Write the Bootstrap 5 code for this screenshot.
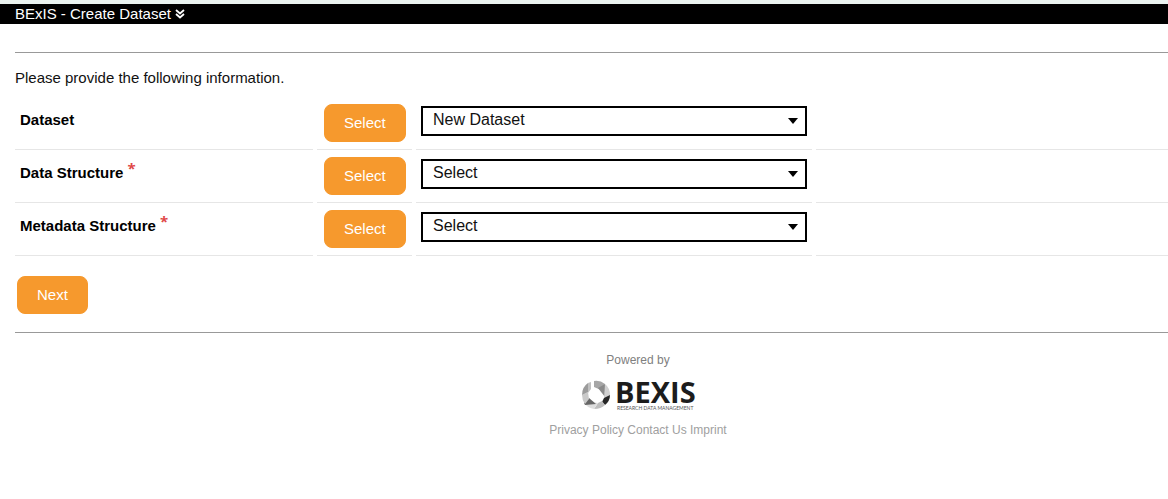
<!DOCTYPE html>
<html lang="en">
<head>
<meta charset="utf-8">
<meta name="viewport" content="width=device-width, initial-scale=1">
<title>BExIS - Create Dataset</title>
<link href="https://cdn.jsdelivr.net/npm/bootstrap@5.3.0/dist/css/bootstrap.min.css" rel="stylesheet">
<style>
body { font-family: "Liberation Sans", Arial, sans-serif; font-size: 15px; line-height: 20px; color: #111; }
.top-strip { height: 4px; background: #eaf3f0; }
.title-bar { height: 20px; background: #000; color: #fff; padding-left: 15px; gap: 4px; }
.page { padding-left: 15px; }
.rule { border: 0; border-top: 1px solid #999; opacity: 1; margin: 0; }
.title-bar + .page > .rule:first-child { margin-top: 28px; }
.intro { margin: 15px 0 9px; }
.form-line { display: grid; grid-template-columns: 298px 95px 396px 1fr; column-gap: 4px; }
.form-line > div { border-bottom: 1px solid #e6e6e6; padding: 7px 5px; }
.form-line label { font-weight: bold; color: #000; padding: 6px 0; }
.req { color: #e04848; font-family: "Open Sans", sans-serif; line-height: 0; vertical-align: 4px; }
.btn-orange { --bs-btn-bg: #f6992d; --bs-btn-color: #fff; --bs-btn-border-color: #f6992d; --bs-btn-hover-bg: #e88a1c; --bs-btn-hover-color: #fff;
  --bs-btn-border-radius: 8px; --bs-btn-font-size: 15px; --bs-btn-line-height: 20px; --bs-btn-padding-x: 19px; --bs-btn-padding-y: 8px; }
.form-line .btn-orange { margin-left: 2px; }
.form-select.pick { height: 30px; margin-top: 2px; padding: 0 30px 3px 10px; border: 2px solid #000; border-radius: 0; color: #111; font-size: 16px; line-height: 23px;
  background-image: url("data:image/svg+xml,%3Csvg xmlns='http://www.w3.org/2000/svg' viewBox='0 0 10 6'%3E%3Cpath d='M0 0h10L5 6z'/%3E%3C/svg%3E");
  background-size: 10px 6px; background-position: right 7px center; }
.next-wrap { padding: 20px 2px 18px; }
.foot { padding: 17px 0 0; margin-left: 108px; font-size: 12px; color: #808080; }
.foot a { color: #a0a0a0; text-decoration: none; }
.brand { overflow: visible; }
</style>
</head>
<body>
<div class="top-strip"></div>
<header class="title-bar d-flex align-items-center">
  <span>BExIS - Create Dataset</span>
  <svg width="10" height="10" viewBox="0 0 10 10" fill="none" stroke="#fff" stroke-width="1.800" aria-hidden="true"><path d="M1 1l4 3.500 4-3.500M1 5l4 3.500 4-3.500"/></svg>
</header>
<main class="page overflow-hidden">
  <hr class="rule">
  <p class="intro">Please provide the following information.</p>
  <form>
    <div class="form-line">
      <div><label for="dataset">Dataset</label></div>
      <div><button type="button" class="btn btn-orange">Select</button></div>
      <div><select id="dataset" class="form-select pick"><option>New Dataset</option></select></div>
      <div></div>
    </div>
    <div class="form-line">
      <div><label for="structure">Data Structure <span class="req">*</span></label></div>
      <div><button type="button" class="btn btn-orange">Select</button></div>
      <div><select id="structure" class="form-select pick"><option>Select</option></select></div>
      <div></div>
    </div>
    <div class="form-line">
      <div><label for="metadata">Metadata Structure <span class="req">*</span></label></div>
      <div><button type="button" class="btn btn-orange">Select</button></div>
      <div><select id="metadata" class="form-select pick"><option>Select</option></select></div>
      <div></div>
    </div>
    <div class="next-wrap"><button type="button" class="btn btn-orange">Next</button></div>
  </form>
  <hr class="rule">
</main>
<footer class="foot text-center">
  <div>Powered by</div>
  <svg class="brand d-block mx-auto my-2" width="116" height="34" viewBox="0 0 116 34" role="img" aria-label="BEXIS Research Data Management">
    <path fill="#a6a6a6" d="M14 3Q20 2 25 6L21 12 14 9z"/>
    <path fill="#8a8a8a" d="M18 10L25 6 25 19z"/>
    <path fill="#d0d0d0" d="M25 6Q30 10 30 17L24 21z"/>
    <path fill="#262626" d="M30 17Q30 23 25 27L22 24 24 20z"/>
    <path fill="#bdbdbd" d="M25 27Q21 31 14 31L18 25 22 23z"/>
    <path fill="#dedede" d="M14 31Q8 30 5 26L12 24 18 25z"/>
    <path fill="#666" d="M4 25L9 20 16 26 5 27z"/>
    <path fill="#c9c9c9" d="M5 26Q2 22 2 17L8 14 9 21z"/>
    <path fill="#9b9b9b" d="M2 17Q2 9 8 5L8 14z"/>
    <path fill="#c0c0c0" d="M8 5L11 4 11 11 8 15z"/>
    <text x="35" y="25" font-family="Open Sans, sans-serif" font-size="29" font-weight="700" fill="#1c1c1c">BEXIS</text>
    <text x="37" y="32" font-family="Lato, sans-serif" font-size="5" fill="#555">RESEARCH DATA MANAGEMENT</text>
  </svg>
  <nav><a href="#">Privacy Policy</a> <a href="#">Contact Us</a> <a href="#">Imprint</a></nav>
</footer>
<script src="https://cdn.jsdelivr.net/npm/bootstrap@5.3.0/dist/js/bootstrap.bundle.min.js"></script>
</body>
</html>
